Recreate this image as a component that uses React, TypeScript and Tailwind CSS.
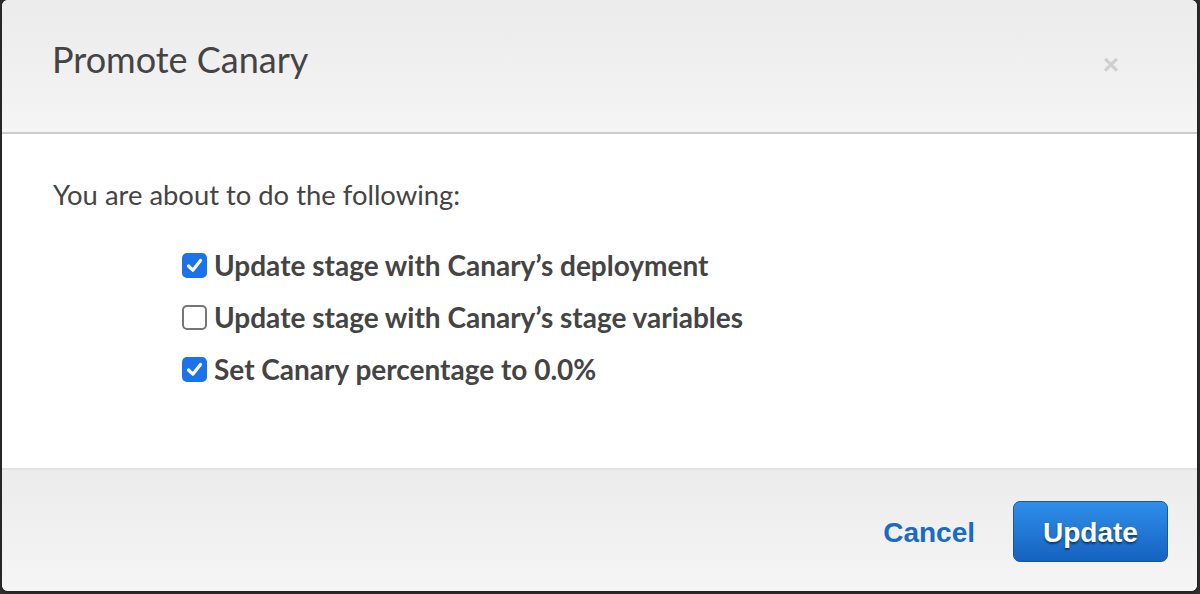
import React from "react";

function Check({ checked }: { checked: boolean }) {
  if (checked) {
    return (
      <span className="flex h-[25px] w-[25px] shrink-0 items-center justify-center rounded-[5px] bg-[#1a73e8]">
        <svg width="17" height="17" viewBox="0 0 17 17">
          <path d="M2.5 9 L6.8 13.2 L14.5 3.5" fill="none" stroke="white" strokeWidth="3.2" strokeLinecap="round" strokeLinejoin="round" />
        </svg>
      </span>
    );
  }
  return <span className="h-[25px] w-[25px] shrink-0 rounded-[5px] border-2 border-[#767676] bg-white" />;
}

export default function App() {
  const items = [
    { label: "Update stage with Canary\u2019s deployment", checked: true },
    { label: "Update stage with Canary\u2019s stage variables", checked: false },
    { label: "Set Canary percentage to 0.0%", checked: true },
  ];
  return (
    <div className="h-[594px] w-[1200px] overflow-hidden bg-[#2f3133] pb-[3px] pl-[2px] pr-[3px]">
      <div className="flex h-[591px] w-[1195px] flex-col overflow-hidden rounded-[6px] bg-white shadow-[0_0_6px_rgba(0,0,0,0.6)]" style={{ fontFamily: "Lato, 'Open Sans', sans-serif" }}>
        <div className="flex h-[134px] shrink-0 items-start justify-between border-b-2 border-[#cccccc] bg-gradient-to-b from-[#ebebeb] to-[#f5f5f5] pl-[50px] pr-[78px] pt-[37px]">
          <h1 className="text-[36px] leading-[44px] text-[#444444]">Promote Canary</h1>
          <span className="mt-[14px] text-[28px] font-bold leading-[28px] text-[#cfcfcf]" style={{ fontFamily: "'Liberation Sans', Arial, sans-serif" }}>×</span>
        </div>
        <div className="h-[334px] shrink-0 bg-white pl-[51px] pt-[45px]">
          <p className="text-[27.4px] leading-[32px] text-[#444444]">You are about to do the following:</p>
          <div className="mt-[28px] flex flex-col pl-[129px]">
            {items.map((it) => (
              <div key={it.label} className="flex h-[52px] items-center gap-[7px]">
                <Check checked={it.checked} />
                <span className="text-[28px] font-bold leading-[32px] text-[#444444]">{it.label}</span>
              </div>
            ))}
          </div>
        </div>
        <div className="flex flex-1 items-center justify-end gap-[38px] border-t-2 border-[#e2e2e2] bg-gradient-to-b from-[#ececec] to-[#f5f5f5] pr-[29px] pt-[1px]" style={{ fontFamily: "'Liberation Sans', Arial, sans-serif" }}>
          <span className="pt-[3px] text-[28px] font-bold text-[#1a6bc4]">Cancel</span>
          <button className="flex h-[61px] w-[155px] items-center justify-center rounded-[7px] border border-[#17579f] bg-gradient-to-b from-[#2f8fea] to-[#1562c0] pt-[3px] text-[28px] font-bold text-white [text-shadow:0_2px_2px_rgba(0,0,0,0.5)]">
            Update
          </button>
        </div>
      </div>
    </div>
  );
}
